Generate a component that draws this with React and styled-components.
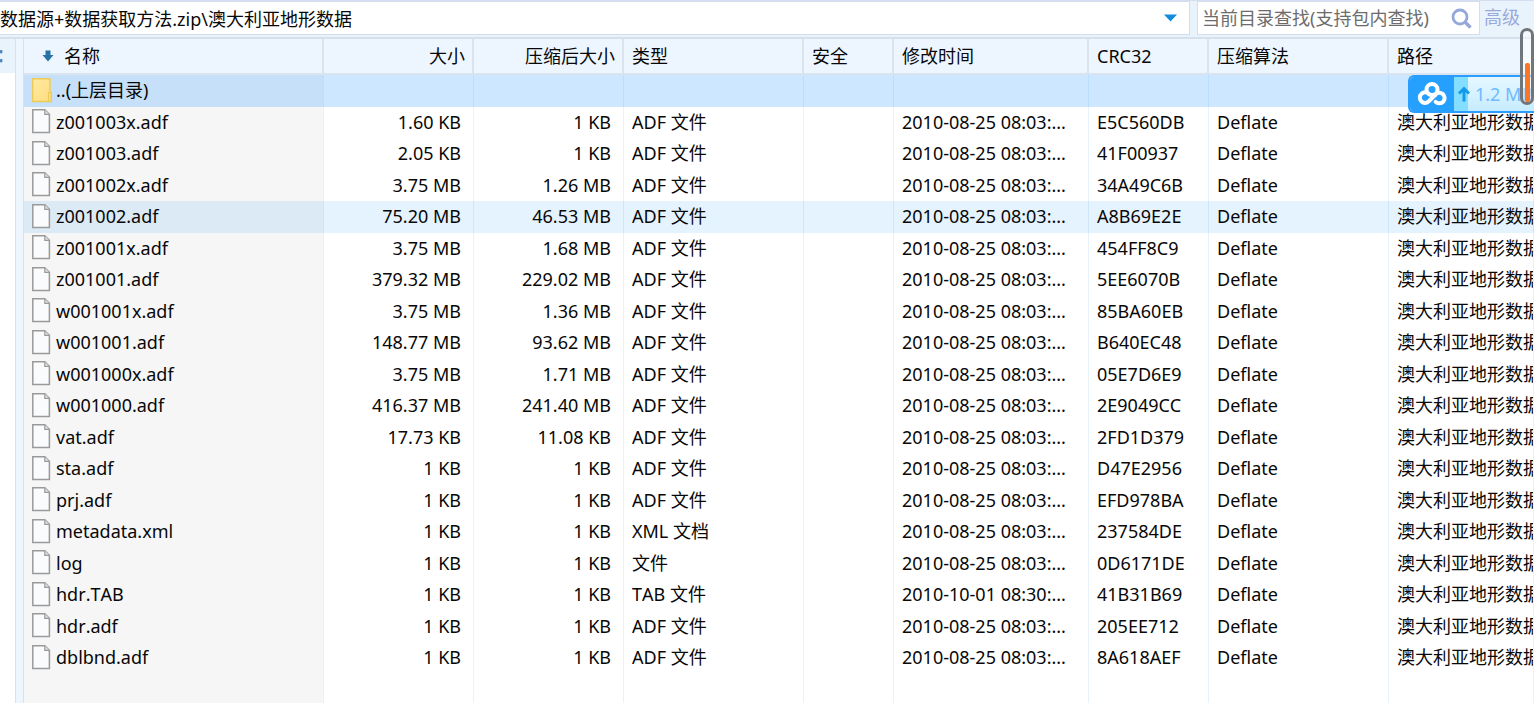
import React from "react";
import styled, { createGlobalStyle, css } from "styled-components";

const GlobalStyle = createGlobalStyle`
  *, *::before, *::after { box-sizing: border-box; }
  body {
    margin: 0;
    overflow: hidden;
    background: #ffffff;
    color: #080808;
    font: 18px/24px "Noto Sans", "Noto Sans CJK SC", sans-serif;
    font-kerning: none;
  }
  button, input { font: inherit; font-kerning: none; }
`;

const Window = styled.div`
  display: flex;
  flex-direction: column;
  height: 100vh;
  overflow: hidden;
`;

const Toolbar = styled.div`
  display: flex;
  flex: none;
  height: 39px;
  padding: 0 0 2px;
  background: #e9f3fb;
  border-top: 1px solid #d3dff0;
  border-bottom: 2px solid #d5e0ec;
`;

const Field = styled.div`
  display: flex;
  align-items: center;
  background: #ffffff;
  border: 1px solid #d5deee;
  border-left-width: ${(p) => (p.$flush ? "0" : "1px")};
  ${(p) => (p.$grow ? css`flex: 1; min-width: 0;` : css`flex: none; width: 283px; margin-left: 7px;`)}
`;

const TextInput = styled.input`
  flex: 1;
  min-width: 0;
  height: 30px;
  padding: 0 0 0 ${(p) => (p.$inset ? "4px" : "0")};
  border: 0;
  outline: 0;
  background: transparent;
  color: #080808;
  &::placeholder { color: #6c6c6c; opacity: 1; }
`;

const IconButton = styled.button`
  display: flex;
  align-items: center;
  justify-content: center;
  width: ${(p) => p.$width};
  height: 30px;
  padding: 0;
  border: 0;
  background: transparent;
`;

const AdvancedLink = styled.a`
  align-self: center;
  width: 54px;
  padding: 0 0 2px 4px;
  color: #99a9dc;
  text-decoration: none;
`;

const Content = styled.div`
  display: flex;
  flex: 1;
  min-height: 0;
`;

const SidePanel = styled.aside`
  flex: none;
  width: 15px;
`;

const SideHeader = styled.div`
  display: flex;
  align-items: center;
  height: 34px;
  background: #e9f3fc;
`;

const Splitter = styled.div`
  flex: none;
  width: 9px;
  background: #edf5fe;
  border-left: 1px solid #d5e2f0;
  border-right: 1px solid #d5e2f0;
`;

const TableWrap = styled.main`
  flex: 1;
  min-width: 0;
  overflow: hidden;
`;

const Table = styled.table`
  width: 100%;
  height: 100%;
  table-layout: fixed;
  border-collapse: separate;
  border-spacing: 0;
`;

const Col = styled.col`
  width: ${(p) => p.$width || "auto"};
`;

const HeadCell = styled.th`
  height: 36px;
  padding: 0 ${(p) => (p.$right ? "7px" : "0")} 0 8px;
  overflow: hidden;
  background: #edf6ff;
  border-right: 2px solid #dae4ee;
  border-bottom: 2px solid #d9e4ef;
  font-weight: 400;
  text-align: ${(p) => (p.$right ? "right" : "left")};
  white-space: nowrap;
`;

const SortButton = styled.button`
  display: flex;
  align-items: center;
  gap: 10px;
  margin-left: 10px;
  padding: 0;
  border: 0;
  background: transparent;
  color: inherit;
`;

const Cell = styled.td`
  padding: 0 ${(p) => (p.$right ? "12px" : "0")} 2px 8px;
  overflow: hidden;
  border-right: 1px solid #e6f2fc;
  border-left: 0;
  text-align: ${(p) => (p.$right ? "right" : "left")};
  white-space: nowrap;
  &:first-child { background: #f6f6f6; }
`;

const Row = styled.tr`
  height: 31px;
  &:nth-child(odd) { height: 32px; }
  ${(p) => p.$selected && css`
    ${Cell} { background: #cce7ff; border-right-color: #b9deff; }
    ${Cell}:first-child { background: #c5e0f8; }
  `}
  ${(p) => p.$hovered && css`
    ${Cell} { background: #e5f3ff; border-right-color: #cfe5f8; }
    ${Cell}:first-child { background: #dceaf6; }
  `}
`;

const FillerRow = styled.tr`
  height: auto;
`;

const FileName = styled.span`
  display: flex;
  align-items: center;
  gap: 4px;
  svg { flex: none; }
`;

const UploadWidget = styled.div`
  position: absolute;
  top: 75px;
  right: 0;
  display: flex;
  width: 126px;
  height: 38px;
  overflow: hidden;
  border: 2px solid #2a9dff;
  border-right: 0;
  border-radius: 6px 0 0 6px;
  background: linear-gradient(#e6f8ff, #c6ecff);
  color: #70baff;
  white-space: nowrap;
`;

const WidgetLogo = styled.div`
  display: flex;
  flex: none;
  align-items: center;
  justify-content: center;
  width: 44px;
  background: #25a0ff;
`;

const WidgetProgress = styled.div`
  display: flex;
  flex: none;
  align-items: center;
  width: 14px;
  background: #84deff;
  svg { flex: none; margin-left: 4px; }
`;

const WidgetSpeed = styled.span`
  align-self: center;
  padding-left: 7px;
`;

const Gauge = styled.div`
  position: absolute;
  top: 28px;
  right: 0;
  display: flex;
  align-items: flex-end;
  justify-content: center;
  width: 14px;
  height: 77px;
  border: 3px solid #70777c;
  border-radius: 7px;
  background: rgba(255, 255, 255, 0.45);
`;

const GaugeFill = styled.div`
  width: 5px;
  height: 39px;
  border-radius: 2px;
  background: #fb7622;
`;

const DropIcon = () => (
  <svg width="13" height="8" viewBox="0 0 13 8" aria-hidden="true">
    <path d="M0 0.5H13L6.5 7.5Z" fill="#118bdd" />
  </svg>
);

const SearchIcon = () => (
  <svg width="21" height="21" viewBox="0 0 21 21" fill="none" stroke="#94a8da" aria-hidden="true">
    <circle cx="9" cy="9" r="7" strokeWidth="2.8" />
    <path d="M14 14L19.5 19.5" strokeWidth="3.4" />
  </svg>
);

const SortArrow = () => (
  <svg width="12" height="12" viewBox="0 0 12 12" aria-hidden="true">
    <path d="M3.5 0.5H8.5V5H11.5L6 11.5L0.5 5H3.5Z" fill="#2873a6" />
  </svg>
);

const SideChevron = () => (
  <svg width="3" height="16" viewBox="0 0 3 16" aria-hidden="true">
    <rect x="0" y="2" width="2.4" height="3.4" rx="0.8" fill="#4c83bd" />
    <rect x="0" y="11" width="2.4" height="3.4" rx="0.8" fill="#4c83bd" />
  </svg>
);

const FolderIcon = () => (
  <svg width="20" height="25" viewBox="0 0 20 25" aria-hidden="true">
    <defs>
      <linearGradient id="folder" x1="0" y1="0" x2="1" y2="1">
        <stop offset="0" stopColor="#ffeaa2" />
        <stop offset="1" stopColor="#ffdd7e" />
      </linearGradient>
    </defs>
    <path d="M0.7 0.7H18V14.5H19.3V23.5H0.7Z" fill="url(#folder)" stroke="#ecca58" strokeWidth="1.4" />
    <path d="M18 14.5H16.5V23.5" fill="none" stroke="#ecca58" strokeWidth="1.2" />
  </svg>
);

const FileIcon = () => (
  <svg width="20" height="25" viewBox="0 0 20 25" aria-hidden="true">
    <path d="M0.8 0.8H12.8L17.4 5.4V23.4H0.8Z" fill="#fafbfc" stroke="#9a9a9a" strokeWidth="1.5" />
    <path d="M12.8 0.8V5.4H17.4" fill="#e2e2e2" stroke="#9a9a9a" strokeWidth="1.2" />
  </svg>
);

const CloudLogo = () => (
  <svg width="30" height="24" viewBox="0 0 30 24" fill="none" stroke="#ffffff" strokeWidth="4" strokeLinecap="round" aria-hidden="true">
    <circle cx="15" cy="7.5" r="5.5" />
    <path d="M12.2 12.2A5.3 5.3 0 1 0 12 19.2L18 13" />
    <path d="M18 13A5.3 5.3 0 1 1 18.6 19.8" />
  </svg>
);

const UploadArrow = () => (
  <svg width="12" height="16" viewBox="0 0 12 16" fill="none" stroke="#129bea" strokeWidth="3" aria-hidden="true">
    <path d="M6 15.5V3M1 7.5L6 2.5L11 7.5" />
  </svg>
);

const DATE = "2010-08-25 08:03:...";

const FILES = [
  ["z001003x.adf", "1.60 KB", "1 KB", "ADF 文件", DATE, "E5C560DB"],
  ["z001003.adf", "2.05 KB", "1 KB", "ADF 文件", DATE, "41F00937"],
  ["z001002x.adf", "3.75 MB", "1.26 MB", "ADF 文件", DATE, "34A49C6B"],
  ["z001002.adf", "75.20 MB", "46.53 MB", "ADF 文件", DATE, "A8B69E2E"],
  ["z001001x.adf", "3.75 MB", "1.68 MB", "ADF 文件", DATE, "454FF8C9"],
  ["z001001.adf", "379.32 MB", "229.02 MB", "ADF 文件", DATE, "5EE6070B"],
  ["w001001x.adf", "3.75 MB", "1.36 MB", "ADF 文件", DATE, "85BA60EB"],
  ["w001001.adf", "148.77 MB", "93.62 MB", "ADF 文件", DATE, "B640EC48"],
  ["w001000x.adf", "3.75 MB", "1.71 MB", "ADF 文件", DATE, "05E7D6E9"],
  ["w001000.adf", "416.37 MB", "241.40 MB", "ADF 文件", DATE, "2E9049CC"],
  ["vat.adf", "17.73 KB", "11.08 KB", "ADF 文件", DATE, "2FD1D379"],
  ["sta.adf", "1 KB", "1 KB", "ADF 文件", DATE, "D47E2956"],
  ["prj.adf", "1 KB", "1 KB", "ADF 文件", DATE, "EFD978BA"],
  ["metadata.xml", "1 KB", "1 KB", "XML 文档", DATE, "237584DE"],
  ["log", "1 KB", "1 KB", "文件", DATE, "0D6171DE"],
  ["hdr.TAB", "1 KB", "1 KB", "TAB 文件", "2010-10-01 08:30:...", "41B31B69"],
  ["hdr.adf", "1 KB", "1 KB", "ADF 文件", DATE, "205EE712"],
  ["dblbnd.adf", "1 KB", "1 KB", "ADF 文件", DATE, "8A618AEF"],
];

const COLUMNS = [
  { label: "名称", width: "300px" },
  { label: "大小", width: "150px", right: true },
  { label: "压缩后大小", width: "150px", right: true },
  { label: "类型", width: "180px" },
  { label: "安全", width: "90px" },
  { label: "修改时间", width: "195px" },
  { label: "CRC32", width: "120px" },
  { label: "压缩算法", width: "180px" },
  { label: "路径" },
];

const FileRow = ({ file, hovered }) => {
  const [name, size, packed, type, date, crc] = file;
  return (
    <Row $hovered={hovered}>
      <Cell><FileName><FileIcon />{name}</FileName></Cell>
      <Cell $right>{size}</Cell>
      <Cell $right>{packed}</Cell>
      <Cell>{type}</Cell>
      <Cell />
      <Cell>{date}</Cell>
      <Cell>{crc}</Cell>
      <Cell>Deflate</Cell>
      <Cell>澳大利亚地形数据</Cell>
    </Row>
  );
};

export default function App() {
  return (
    <Window>
      <GlobalStyle />
      <Toolbar>
        <Field $grow $flush>
          <TextInput aria-label="路径" defaultValue={"数据源+数据获取方法.zip\\澳大利亚地形数据"} />
          <IconButton $width="38px" aria-label="展开"><DropIcon /></IconButton>
        </Field>
        <Field>
          <TextInput $inset aria-label="查找" placeholder="当前目录查找(支持包内查找)" />
          <IconButton $width="36px" aria-label="搜索"><SearchIcon /></IconButton>
        </Field>
        <AdvancedLink href="#advanced">高级</AdvancedLink>
      </Toolbar>
      <Content>
        <SidePanel>
          <SideHeader><SideChevron /></SideHeader>
        </SidePanel>
        <Splitter />
        <TableWrap>
          <Table>
            <colgroup>
              {COLUMNS.map((c) => <Col key={c.label} $width={c.width} />)}
            </colgroup>
            <thead>
              <tr>
                {COLUMNS.map((c, i) => (
                  <HeadCell key={c.label} scope="col" $right={c.right}>
                    {i === 0 ? <SortButton><SortArrow />{c.label}</SortButton> : c.label}
                  </HeadCell>
                ))}
              </tr>
            </thead>
            <tbody>
              <Row $selected>
                <Cell><FileName><FolderIcon />..(上层目录)</FileName></Cell>
                {COLUMNS.slice(1).map((c) => <Cell key={c.label} />)}
              </Row>
              {FILES.map((f) => <FileRow key={f[0]} file={f} hovered={f[0] === "z001002.adf"} />)}
              <FillerRow>
                {COLUMNS.map((c) => <Cell key={c.label} />)}
              </FillerRow>
            </tbody>
          </Table>
        </TableWrap>
      </Content>
      <UploadWidget>
        <WidgetLogo><CloudLogo /></WidgetLogo>
        <WidgetProgress><UploadArrow /></WidgetProgress>
        <WidgetSpeed>1.2 MB/s</WidgetSpeed>
      </UploadWidget>
      <Gauge><GaugeFill /></Gauge>
    </Window>
  );
}
